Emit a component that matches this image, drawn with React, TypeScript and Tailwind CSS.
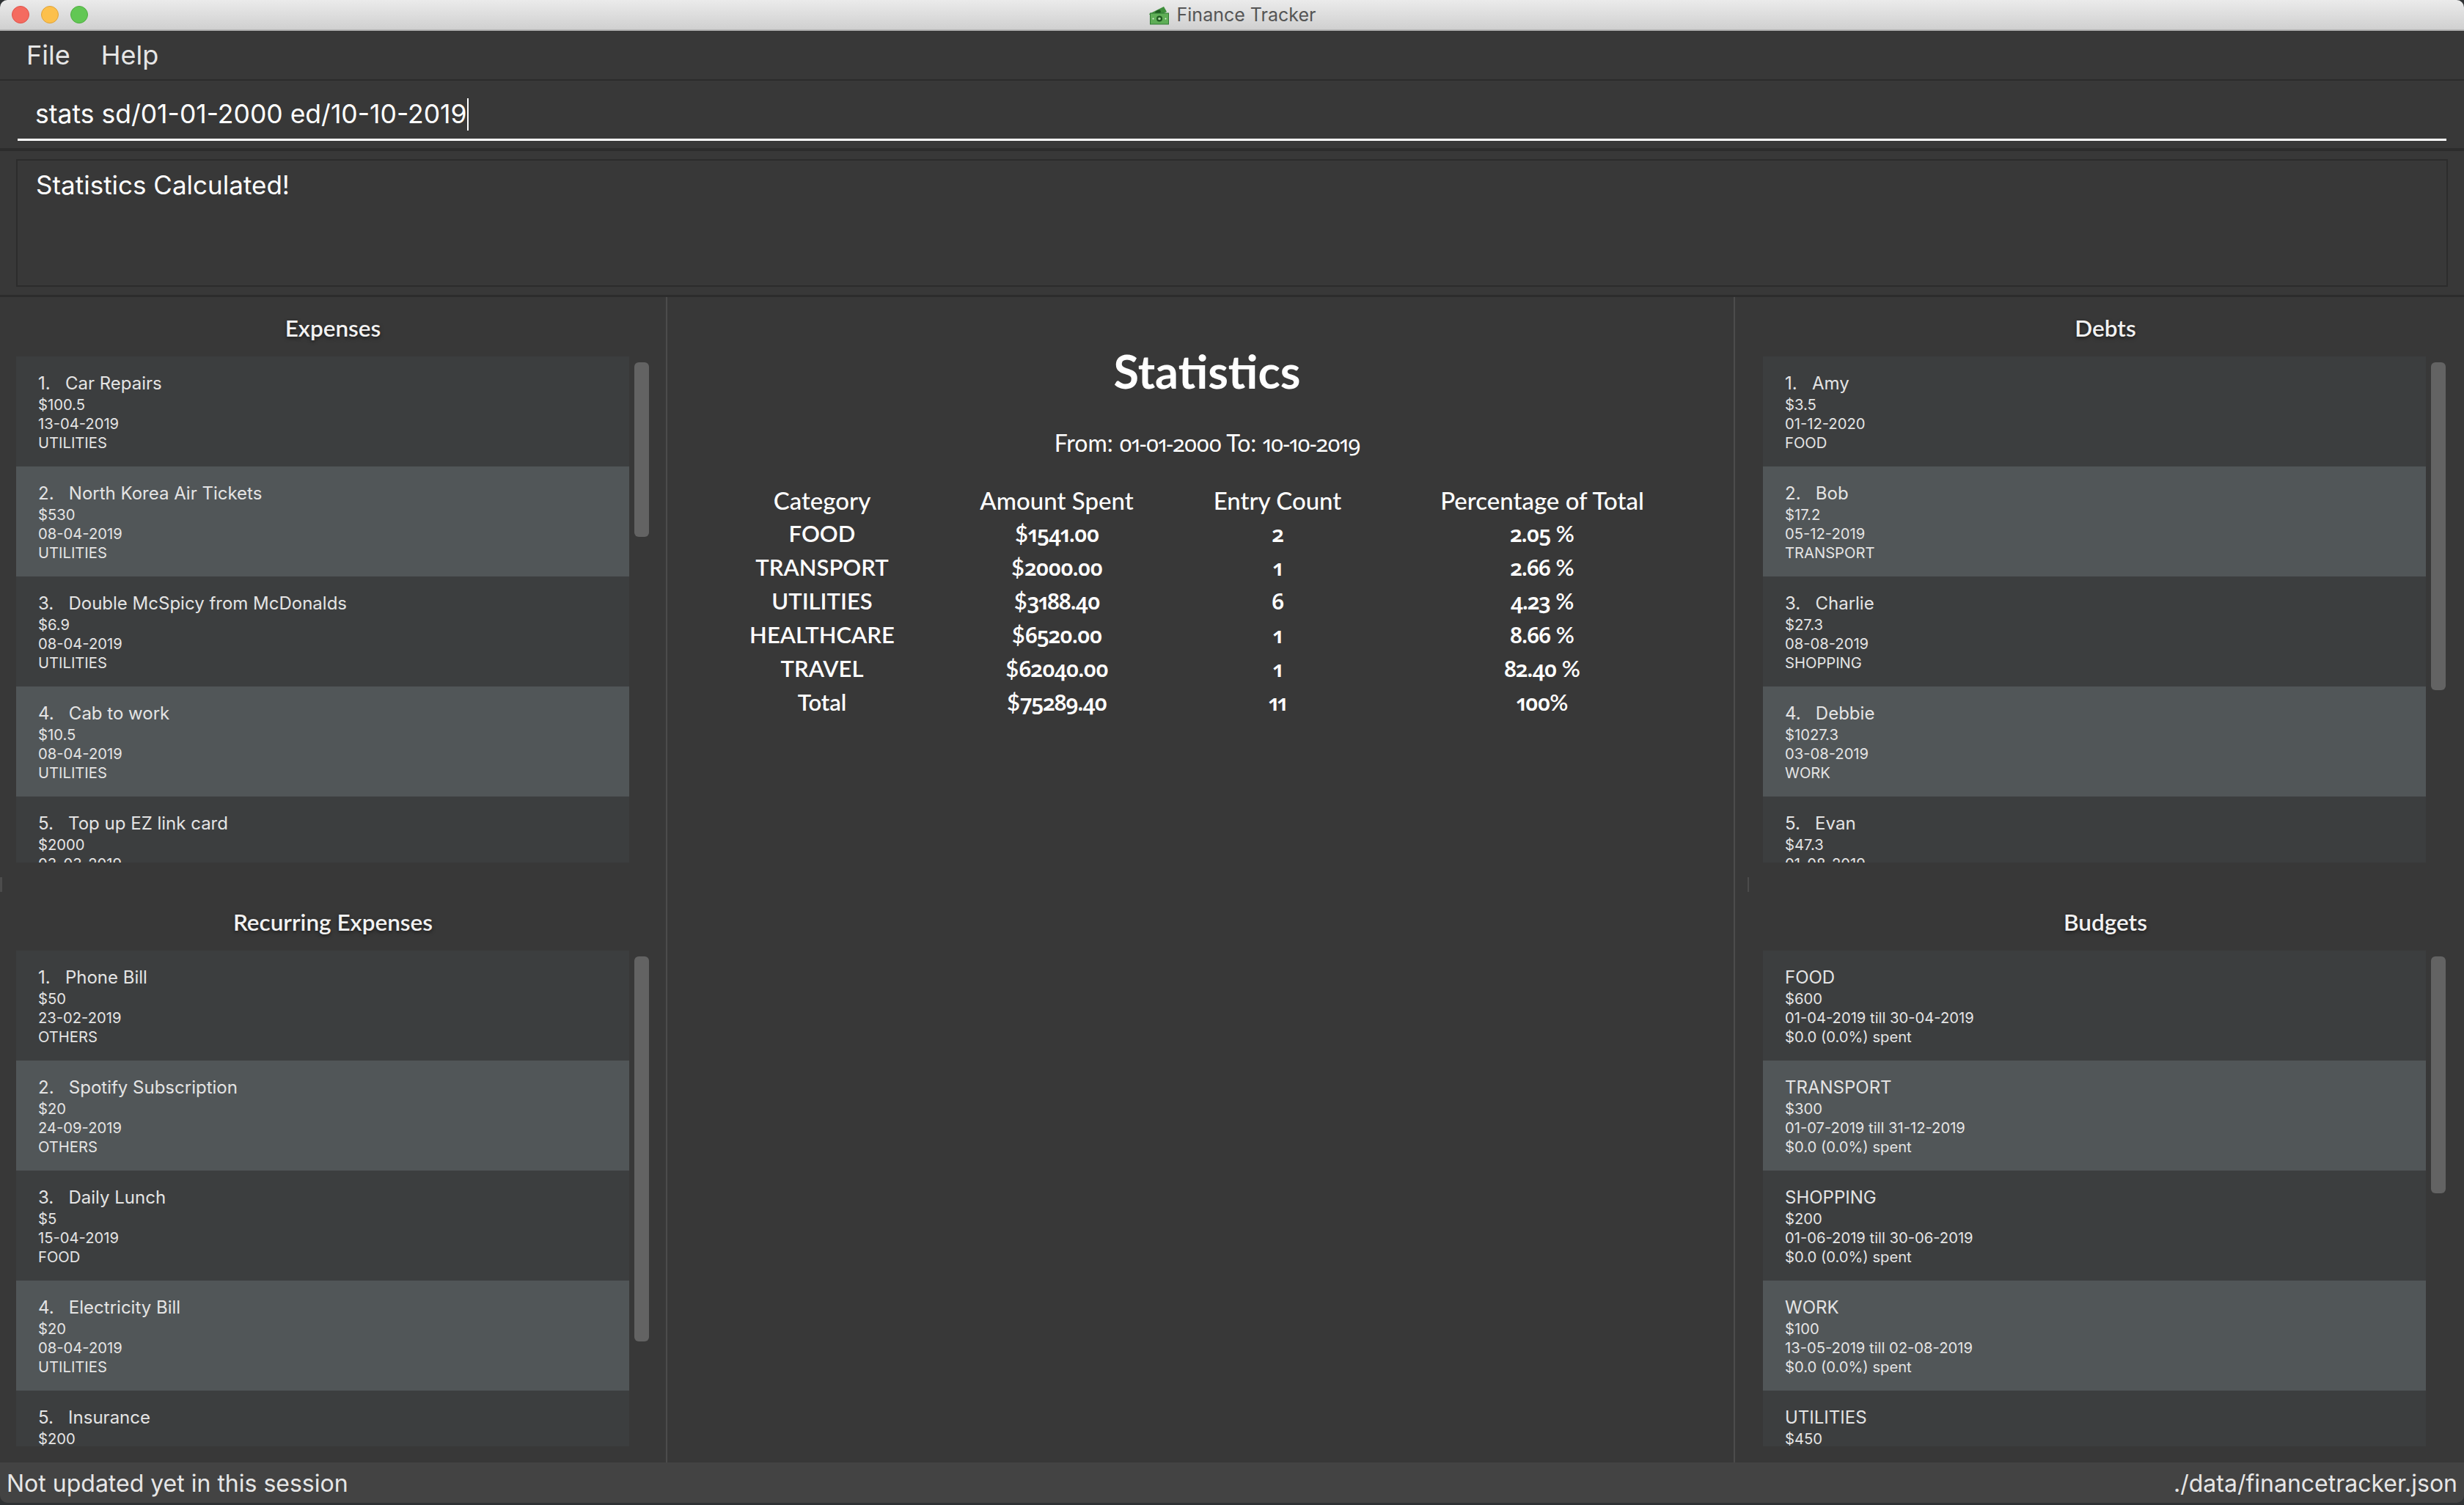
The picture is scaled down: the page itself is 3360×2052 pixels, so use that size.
const UI_FONT = "font-['Inter','Liberation_Sans',sans-serif]";
const STATS_FONT = "font-['Lato','Open_Sans',sans-serif]";

type Row = { title: string; lines: string[] };

const EXPENSES: Row[] = [
  { title: "1.\u00a0\u00a0\u00a0Car Repairs", lines: ["$100.5", "13-04-2019", "UTILITIES"] },
  { title: "2.\u00a0\u00a0\u00a0North Korea Air Tickets", lines: ["$530", "08-04-2019", "UTILITIES"] },
  { title: "3.\u00a0\u00a0\u00a0Double McSpicy from McDonalds", lines: ["$6.9", "08-04-2019", "UTILITIES"] },
  { title: "4.\u00a0\u00a0\u00a0Cab to work", lines: ["$10.5", "08-04-2019", "UTILITIES"] },
  { title: "5.\u00a0\u00a0\u00a0Top up EZ link card", lines: ["$2000", "03-03-2019"] },
];

const RECURRING: Row[] = [
  { title: "1.\u00a0\u00a0\u00a0Phone Bill", lines: ["$50", "23-02-2019", "OTHERS"] },
  { title: "2.\u00a0\u00a0\u00a0Spotify Subscription", lines: ["$20", "24-09-2019", "OTHERS"] },
  { title: "3.\u00a0\u00a0\u00a0Daily Lunch", lines: ["$5", "15-04-2019", "FOOD"] },
  { title: "4.\u00a0\u00a0\u00a0Electricity Bill", lines: ["$20", "08-04-2019", "UTILITIES"] },
  { title: "5.\u00a0\u00a0\u00a0Insurance", lines: ["$200"] },
];

const DEBTS: Row[] = [
  { title: "1.\u00a0\u00a0\u00a0Amy", lines: ["$3.5", "01-12-2020", "FOOD"] },
  { title: "2.\u00a0\u00a0\u00a0Bob", lines: ["$17.2", "05-12-2019", "TRANSPORT"] },
  { title: "3.\u00a0\u00a0\u00a0Charlie", lines: ["$27.3", "08-08-2019", "SHOPPING"] },
  { title: "4.\u00a0\u00a0\u00a0Debbie", lines: ["$1027.3", "03-08-2019", "WORK"] },
  { title: "5.\u00a0\u00a0\u00a0Evan", lines: ["$47.3", "01-08-2019"] },
];

const BUDGETS: Row[] = [
  { title: "FOOD", lines: ["$600", "01-04-2019 till 30-04-2019", "$0.0 (0.0%) spent"] },
  { title: "TRANSPORT", lines: ["$300", "01-07-2019 till 31-12-2019", "$0.0 (0.0%) spent"] },
  { title: "SHOPPING", lines: ["$200", "01-06-2019 till 30-06-2019", "$0.0 (0.0%) spent"] },
  { title: "WORK", lines: ["$100", "13-05-2019 till 02-08-2019", "$0.0 (0.0%) spent"] },
  { title: "UTILITIES", lines: ["$450"] },
];

const STATS_HEADER = ["Category", "Amount Spent", "Entry Count", "Percentage of Total"];

const STATS = [
  ["FOOD", "$1541.00", "2", "2.05 %"],
  ["TRANSPORT", "$2000.00", "1", "2.66 %"],
  ["UTILITIES", "$3188.40", "6", "4.23 %"],
  ["HEALTHCARE", "$6520.00", "1", "8.66 %"],
  ["TRAVEL", "$62040.00", "1", "82.40 %"],
  ["Total", "$75289.40", "11", "100%"],
];

// the digits in the stats pane are old-style, Noto Sans can do those
function Digits({ text }: { text: string }) {
  const parts = text.split(/([\d.,-]*\d[\d.,-]*)/);
  return (
    <>
      {parts.map((part, i) =>
        i % 2 === 1 ? (
          <span key={i} className="font-['Noto_Sans',sans-serif] text-[0.96em] tracking-[-0.04em] [font-variant-numeric:oldstyle-nums_proportional-nums]">
            {part}
          </span>
        ) : (
          <span key={i}>{part}</span>
        ),
      )}
    </>
  );
}

function MoneyIcon() {
  return (
    <svg width="28" height="26" viewBox="0 0 28 26" className="shrink-0">
      <path d="M1 11 21 1l4 7-19 10z" fill="#3f8f3c" />
      <ellipse cx="13" cy="8.5" rx="4" ry="2.6" fill="#1f5a22" transform="rotate(-25 13 8.5)" />
      <rect x="2.5" y="10" width="25" height="15" fill="#5fae57" stroke="#2f7a32" strokeWidth="1" />
      <circle cx="15" cy="17.5" r="4" fill="#1f5a22" />
      <circle cx="15" cy="17.5" r="1.8" fill="#a9d8a0" />
      <circle cx="6.5" cy="17.5" r="1" fill="#e3f3df" />
      <circle cx="23.5" cy="17.5" r="1" fill="#e3f3df" />
    </svg>
  );
}

function PaneList({ rows, listWidth, barHeight }: { rows: Row[]; listWidth: string; barHeight: string }) {
  return (
    <div className="flex min-h-0 flex-1 pl-[22px]">
      <div className={`${listWidth} overflow-hidden`}>
        {rows.map((row, i) => (
          <div
            key={row.title}
            className={`h-[150px] px-[30px] pt-[22px] text-[20.2px] leading-[26px] text-[#e4e4e4] ${
              i % 2 === 0 ? "bg-[#3c3e3f]" : "bg-[#515658]"
            }`}
          >
            <div className="mb-[1px] text-[24px] leading-[30px] whitespace-pre">{row.title}</div>
            {row.lines.map((line) => (
              <div key={line}>{line}</div>
            ))}
          </div>
        ))}
      </div>
      <div className={`ml-[7px] mt-2 w-[20px] rounded-[6px] bg-[#636363] ${barHeight}`} />
    </div>
  );
}

function PaneHeading({ label, height }: { label: string; height: string }) {
  return (
    <div className={`flex items-end justify-center ${height} pb-[20px]`}>
      <span className={`text-[31.5px] leading-[38px] font-semibold text-[#f2f2f2] [text-shadow:0_2px_5px_rgba(0,0,0,0.55)] ${STATS_FONT}`}>
        {label}
      </span>
    </div>
  );
}

export default function App() {
  return (
    <div className={`flex h-[2052px] w-[3360px] flex-col overflow-hidden bg-[#2f3234] ${UI_FONT}`}>
      {/* Title bar */}
      <div className="relative flex h-[42px] shrink-0 items-center justify-center rounded-t-[10px] border-b-2 border-[#b4b4b4] bg-gradient-to-b from-[#ebebeb] to-[#d0d0d0]">
        <div className="absolute left-4 flex gap-4">
          <span className="h-6 w-6 rounded-full border border-[#e0534a] bg-[#f46b60]" />
          <span className="h-6 w-6 rounded-full border border-[#dfa33a] bg-[#fcc04c]" />
          <span className="h-6 w-6 rounded-full border border-[#4fae42] bg-[#62c754]" />
        </div>
        <div className="flex items-center gap-[11px] pt-[1px] text-[25px] text-[#555555]">
          <MoneyIcon />
          <span>Finance Tracker</span>
        </div>
      </div>

      <div className="flex min-h-0 flex-1 flex-col rounded-b-[10px] bg-[#383838]">
        {/* Menu bar */}
        <div className="flex h-[68px] shrink-0 items-center gap-[42px] border-b-2 border-[#2c2c2c] pl-[36px] text-[36px] text-[#e6e6e6]">
          <span>File</span>
          <span>Help</span>
        </div>

        {/* Command box */}
        <div className="h-[92px] shrink-0 px-6 pt-[20px]">
          <div className="flex h-[62px] items-center border-b-[3px] border-white pb-[7px] pl-6 text-[35.5px] leading-[44px] text-white">
            <span>stats sd/01-01-2000 ed/10-10-2019</span>
            <span className="h-[44px] w-[2px] bg-white" />
          </div>
        </div>

        {/* Result display */}
        <div className="h-[203px] shrink-0 border-t-[4px] border-b-[3px] border-[#2c2c2c] px-[22px] pt-[11px]">
          <div className="h-[174px] border-2 border-[#2c2c2c] px-[25px] pt-[11px] text-[35px] leading-[44px] text-white">
            Statistics Calculated!
          </div>
        </div>

        {/* Main panes */}
        <div className="flex min-h-0 flex-1">
          <div className="relative flex w-[910px] shrink-0 flex-col border-r-2 border-[#4c4c4c]">
            <div className="flex h-[771px] flex-col">
              <PaneHeading label="Expenses" height="h-[81px]" />
              <PaneList rows={EXPENSES} listWidth="w-[836px]" barHeight="h-[238px]" />
            </div>
            <div className="flex min-h-0 flex-1 flex-col pb-[22px]">
              <PaneHeading label="Recurring Expenses" height="h-[120px]" />
              <PaneList rows={RECURRING} listWidth="w-[836px]" barHeight="h-[525px]" />
            </div>
            <span className="absolute top-[791px] left-0 h-5 w-[3px] bg-[#4c4c4c]" />
          </div>

          <div className={`flex min-w-0 flex-1 flex-col items-center pt-[57px] text-white ${STATS_FONT}`}>
            <div className="ml-[18px] flex flex-col items-center">
              <h1 className="text-[63px] leading-[88px] font-bold">Statistics</h1>
              <p className="mt-[34px] text-[32px] leading-[40px]">
                <Digits text="From: 01-01-2000 To: 10-10-2019" />
              </p>
            </div>
            <div className="mt-[34px] ml-[51px] self-start">
              <div className="grid h-[46px] grid-cols-[320px_320px_282px_440px] items-center text-center text-[33px] font-medium">
                {STATS_HEADER.map((cell) => (
                  <span key={cell}>{cell}</span>
                ))}
              </div>
              {STATS.map((row) => (
                <div
                  key={row[0]}
                  className="grid h-[46px] grid-cols-[320px_320px_282px_440px] items-center text-center text-[31px] font-semibold"
                >
                  {row.map((cell, j) => (
                    <span key={j}>
                      <Digits text={cell} />
                    </span>
                  ))}
                </div>
              ))}
            </div>
          </div>

          <div className="relative flex w-[996px] shrink-0 flex-col border-l-2 border-[#4c4c4c]">
            <div className="flex h-[771px] flex-col pl-[16px]">
              <PaneHeading label="Debts" height="h-[81px]" />
              <PaneList rows={DEBTS} listWidth="w-[904px]" barHeight="h-[447px]" />
            </div>
            <div className="flex min-h-0 flex-1 flex-col pb-[22px] pl-[16px]">
              <PaneHeading label="Budgets" height="h-[120px]" />
              <PaneList rows={BUDGETS} listWidth="w-[904px]" barHeight="h-[323px]" />
            </div>
            <span className="absolute top-[791px] left-[17px] h-5 w-[2px] bg-[#4c4c4c]" />
          </div>
        </div>

        {/* Status bar */}
        <div className="flex h-[55px] shrink-0 items-center justify-between rounded-b-[10px] bg-[#434343] px-[9px] pt-[3px] text-[32px] text-[#e6e6e6]">
          <span>Not updated yet in this session</span>
          <span>./data/financetracker.json</span>
        </div>
      </div>
      <div className="h-[3px] shrink-0" />
    </div>
  );
}
